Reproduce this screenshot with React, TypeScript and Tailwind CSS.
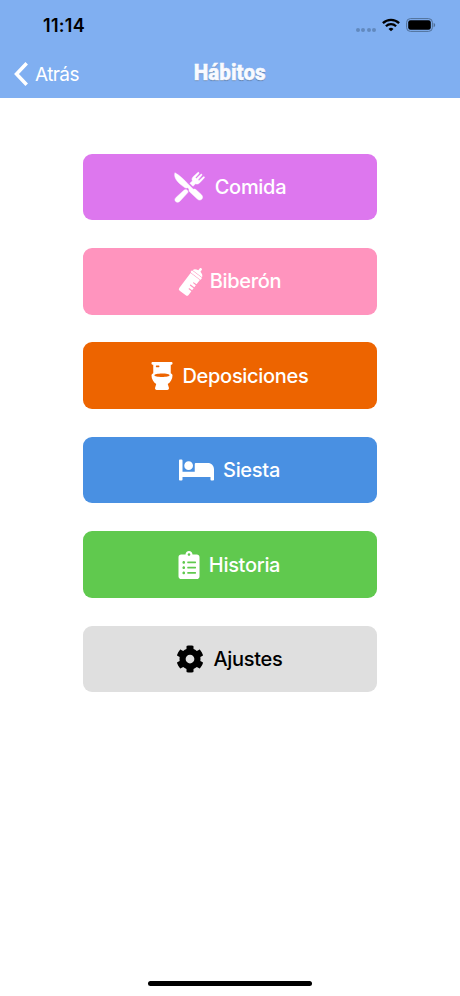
import type { ReactNode } from 'react'
import { FaBed, FaClipboardList, FaCog, FaToilet } from 'react-icons/fa'

function CutleryIcon() {
  return (
    <svg viewBox="0 0 32 30" className="h-[30px] w-8 overflow-visible" fill="currentColor" stroke="currentColor" strokeWidth=".5">
      <path d="M.9.8C5.300 3.100 9.900 7.400 14 11.900l5.300 5.300c1.200-.3 2.200 0 3.100.9l4.800 4.400c1.800 1.800 1.600 3.600.5 4.700s-3 1.200-4.600-.4l-7.200-6.700c-1-1-1.200-2-.8-3.100l-1.500-1.200c-1.300.5-2.500.2-3.900-1C3.500 10.500-.4 5.900.9.8z" />
      <path d="m12.200 17.500-1.900.4-8 7.300c-1.700 1.500-1.700 3.200-.6 4.300s2.900 1.100 4.300-.4l7.800-8.500.2-1.500z" />
      <path d="m15.900 11.200 2.500-2.300c-.8-1.700-.3-3 .8-4.200L23.800.6c.9-.7 1.700.2 1 1.100l-3.400 3.800 1 .9 4.300-4c.9-.8 1.700.1 1 1.100L24 7.800l1 .9 4.200-3.800c1-.7 1.700.2 1 1.100l-4.400 4.700c-1.400 1.400-2.700 1.500-4.200 1.100l-2.700 2.500z" />
    </svg>
  )
}

function BottleIcon() {
  return (
    <svg viewBox="0 0 24 28" className="h-7 w-6 overflow-visible" fill="currentColor">
      <g transform="translate(.8 0) rotate(37 12 14)">
        <path d="M10.700-.8c0-1.700 2.600-1.700 2.600 0v2.200c2.500.6 4.300 1.500 4.500 3.400H6.200c.2-1.900 2-2.800 4.500-3.400z" />
        <rect x="5.600" y="5.300" width="12.800" height="2.500" rx=".8" />
        <path d="M6.200 8.300h11.600v5.500h-3.200a.6.6 0 0 0 0 1.200h3.200v2.500h-4.300a.6.6 0 0 0 0 1.200h4.300v2.500h-3.200a.6.6 0 0 0 0 1.200h3.200v4.700a2 2 0 0 1-2 2H8.200a2 2 0 0 1-2-2z" />
      </g>
    </svg>
  )
}

type Habit = {
  label: string
  icon: ReactNode
  box: string
}

const HABITS: Habit[] = [
  { label: 'Comida', icon: <CutleryIcon />, box: 'bg-[#dd77ee] text-white gap-[9px]' },
  { label: 'Biberón', icon: <BottleIcon />, box: 'bg-[#ff94be] text-white gap-[7px]' },
  { label: 'Deposiciones', icon: <FaToilet className="h-7 w-[22px]" />, box: 'bg-[#ed6400] text-white gap-[9px]' },
  { label: 'Siesta', icon: <FaBed className="h-7 w-[35px]" />, box: 'bg-[#4990e2] text-white gap-[9px] pr-[1px]' },
  { label: 'Historia', icon: <FaClipboardList className="h-7 w-[22px]" />, box: 'bg-[#60c94e] text-white gap-[9px] pr-[2px]' },
  { label: 'Ajustes', icon: <FaCog className="h-7 w-7" />, box: 'bg-[#dfdfdf] text-black gap-[9px] pr-[1px]' },
]

function StatusBar() {
  return (
    <div className="flex h-[50px] items-center justify-between pr-[24px] pl-[43px] text-black">
      <span className="pt-[2px] text-[18px] leading-none font-semibold tracking-[0.3px]">11:14</span>
      <div className="flex items-center">
        <div className="mt-[10px] mr-[6px] flex gap-[1.500px]">
          {[0, 1, 2, 3].map((i) => (
            <span key={i} className="size-1 rounded-full bg-[#6189bf]" />
          ))}
        </div>
        <svg viewBox="0 0 18 14" className="h-[14px] w-[18px]" fill="none" stroke="currentColor" strokeWidth="2.300">
          <path d="M.9 5.100a11.600 11.600 0 0 1 16.200 0" />
          <path d="M3.900 8.300a7.300 7.300 0 0 1 10.200 0" />
          <path d="M9 13.300 6.500 10.900a3.600 3.600 0 0 1 5 0z" fill="currentColor" stroke="none" />
        </svg>
        <svg viewBox="0 0 30 14" className="ml-[6px] h-[14px] w-[30px]">
          <rect x=".6" y=".6" width="25.800" height="12.800" rx="3.800" fill="none" stroke="#507099" strokeWidth="1" />
          <rect x="2.200" y="2.200" width="22.600" height="9.600" rx="2.300" />
          <path d="M27.600 4.700v4.600c1-.4 1.600-1.300 1.600-2.300s-.6-1.900-1.600-2.300z" fill="#507099" />
        </svg>
      </div>
    </div>
  )
}

function NavBar() {
  return (
    <div className="grid h-12 grid-cols-3 items-center text-white">
      <button className="flex items-center gap-[7px] pl-[14px] text-left">
        <svg viewBox="0 0 14 24" className="h-6 w-[14px]" fill="none" stroke="currentColor" strokeWidth="3.500">
          <path d="M12.700 1.300 2.500 12l10.200 10.700" />
        </svg>
        <span className="text-[19px] leading-none tracking-[-0.6px]">Atrás</span>
      </button>
      <h1 className="scale-x-[0.92] pb-[3px] text-center font-['Roboto'] text-[22.500px] leading-none font-black text-[#f8faff] [-webkit-text-stroke:0.4px_#f8faff] [text-shadow:0_1px_1px_rgba(0,0,0,0.3)]">
        Hábitos
      </h1>
    </div>
  )
}

export default function App() {
  return (
    <div className="flex h-[996px] w-[460px] flex-col bg-white font-['Inter',sans-serif]">
      <header className="h-[98px] bg-[#80aff1]">
        <StatusBar />
        <NavBar />
      </header>

      <main className="flex flex-1 flex-col items-center gap-[27.900px] pt-[55.700px]">
        {HABITS.map(({ label, icon, box }) => (
          <button
            key={label}
            className={`flex h-[66.500px] w-[294px] shrink-0 items-center justify-center rounded-[9px] ${box}`}
          >
            {icon}
            <span className="text-[20px] leading-none font-medium tracking-[-0.3px]">{label}</span>
          </button>
        ))}
      </main>

      <div className="mb-[10px] h-[5px] w-[164px] self-center rounded-full bg-black" />
    </div>
  )
}
